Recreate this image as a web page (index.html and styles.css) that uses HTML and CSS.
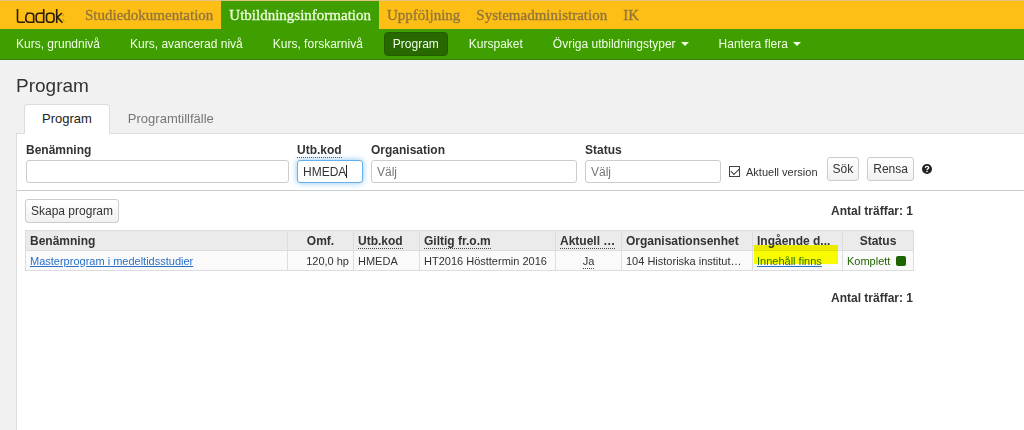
FILE: index.html
```html
<!DOCTYPE html>
<html lang="sv">
<head>
<meta charset="utf-8">
<title>Ladok – Program</title>
<link rel="stylesheet" href="styles.css">
</head>
<body>
<header>
  <nav class="topnav">
    <a class="logo" href="#" aria-label="Ladok">
      <svg width="51" height="18" viewBox="0 0 51 18" fill="none" stroke="#2b1c08" stroke-width="1.6">
        <path d="M1.5 1V12.5Q1.5 14.2 3.2 14.2H9"/>
        <path d="M10.5 5.3H15Q17.7 5.3 17.7 8V14.2H13Q9.800 14.200 9.800 11V9.500Q9.800 6.500 12 5.300"/>
        <path d="M27.700 1V14.200H23Q20.200 14.200 20.200 11.500V8Q20.200 5.300 23 5.300H27.700"/>
        <rect x="30.500" y="5.300" width="7.500" height="8.900" rx="2.600"/>
        <path d="M40.700 1V15M40.900 9.500L46 5M41.500 9.500L46.500 14.800"/>
        <path d="M48 6L46.500 8M46.500 11L48.500 14" stroke="#8fae1a" stroke-width="1"/>
      </svg>
    </a>
    <a href="#">Studiedokumentation</a>
    <a class="current" href="#">Utbildningsinformation</a>
    <a href="#">Uppföljning</a>
    <a href="#">Systemadministration</a>
    <a href="#">IK</a>
  </nav>
  <nav class="subnav">
    <a href="#">Kurs, grundnivå</a>
    <a href="#">Kurs, avancerad nivå</a>
    <a href="#">Kurs, forskarnivå</a>
    <a class="current" href="#">Program</a>
    <a href="#">Kurspaket</a>
    <a class="drop" href="#">Övriga utbildningstyper</a>
    <a class="drop" href="#">Hantera flera</a>
  </nav>
</header>
<main>
  <h1>Program</h1>
  <nav class="tabs">
    <a class="current" href="#">Program</a>
    <a href="#">Programtillfälle</a>
  </nav>
  <section class="panel">
    <form class="search">
      <div class="field name"><label for="name">Benämning</label><input id="name" type="text"></div>
      <div class="field code">
        <label for="code"><abbr>Utb.kod</abbr></label>
        <div class="active"><input id="code" type="text" value="HMEDA"><i class="caret"></i></div>
      </div>
      <div class="field org"><label for="org">Organisation</label><input id="org" type="text" placeholder="Välj"></div>
      <div class="field status"><label for="status">Status</label><input id="status" type="text" placeholder="Välj"></div>
      <label class="check"><input type="checkbox" checked>Aktuell version</label>
      <div class="actions">
        <button type="button">Sök</button>
        <button type="button">Rensa</button>
        <svg class="help" width="10" height="10" viewBox="0 0 10 10" role="img" aria-label="Hjälp">
          <circle cx="5" cy="5" r="5" fill="#222"/>
          <path d="M3.300 3.900Q3.400 2.300 5 2.300Q6.700 2.300 6.700 3.700Q6.700 4.500 5.800 4.900Q5 5.300 5 6" fill="none" stroke="#fff" stroke-width="1.300"/>
          <rect x="4.300" y="6.800" width="1.400" height="1.300" fill="#fff"/>
        </svg>
      </div>
    </form>
    <div class="results">
      <div class="bar"><button type="button">Skapa program</button><strong>Antal träffar: 1</strong></div>
      <table>
        <colgroup><col class="w-name"><col class="w-short"><col class="w-short"><col class="w-from"><col class="w-short"><col class="w-unit"><col class="w-parts"><col class="w-status"></colgroup>
        <thead>
          <tr><th>Benämning</th><th class="center">Omf.</th><th><abbr>Utb.kod</abbr></th><th><abbr>Giltig fr.o.m</abbr></th><th><abbr>Aktuell …</abbr></th><th>Organisationsenhet</th><th>Ingående d...</th><th class="center">Status</th></tr>
        </thead>
        <tbody>
          <tr><td><a href="#">Masterprogram i medeltidsstudier</a></td><td class="right">120,0 hp</td><td>HMEDA</td><td>HT2016 Hösttermin 2016</td><td class="center"><abbr>Ja</abbr></td><td>104 Historiska institut…</td><td class="marked"><a href="#">Innehåll finns</a></td><td class="complete">Komplett<i class="dot"></i></td></tr>
        </tbody>
      </table>
      <div class="bar end"><strong>Antal träffar: 1</strong></div>
    </div>
  </section>
</main>
</body>
</html>
```
FILE: styles.css
```css
* { box-sizing: border-box; }

body {
  margin: 0;
  min-height: 100vh;
  display: flex;
  flex-direction: column;
  background: #f1f1f1;
  color: #333;
  font: 12px/16px "Liberation Sans", Arial, sans-serif;
}

.topnav {
  display: flex;
  height: 29px;
  border-top: 1px solid #e2c383;
  background: #fdbf16;
  font: 15px/28px "Liberation Serif", Georgia, serif;
}
.topnav a {
  padding: 0 8px;
  color: #92743a;
  text-decoration: none;
  white-space: nowrap;
  -webkit-text-stroke: 0.3px;
}
.topnav .logo { padding: 7px 0 0 16px; margin-right: 10px; line-height: 0; }
.topnav .current { background: #3f9e00; color: #eeffdd; }

.subnav {
  display: flex;
  align-items: center;
  gap: 12px;
  height: 31px;
  padding: 0 7px;
  border-bottom: 1px solid #358500;
  background: #3f9e00;
  font-size: 12px;
}
.subnav a {
  padding: 4px 9px;
  color: #f1ffe6;
  text-decoration: none;
  white-space: nowrap;
}
.subnav .current {
  border-radius: 4px;
  border: 1px solid #245d00;
  background: #276800;
  padding: 3px 8px;
}
.drop::after {
  content: "";
  display: inline-block;
  margin-left: 5px;
  vertical-align: 2px;
  border: 4px solid transparent;
  border-top-color: currentColor;
  border-bottom: 0;
}

main { flex: 1; display: flex; flex-direction: column; padding: 14px 0 0 16px; }
h1 { margin: 0; font-size: 19px; line-height: 24px; font-weight: normal; }

.tabs { display: flex; padding-left: 8px; margin-top: 6px; font-size: 13px; }
.tabs a {
  padding: 6px 17px;
  color: #777;
  text-decoration: none;
  line-height: 16px;
  border: 1px solid transparent;
  border-bottom: 0;
}
.tabs .current {
  margin-bottom: -1px;
  padding-bottom: 7px;
  z-index: 1;
  background: #fff;
  color: #222;
  border-color: #ddd;
  border-radius: 4px 4px 0 0;
}

.panel { flex: 1; background: #fff; border: 1px solid #ddd; border-width: 1px 0 0 1px; }

.search {
  display: flex;
  align-items: flex-end;
  padding: 8px 0 7px 9px;
  border-bottom: 1px solid #ccc;
}
.field { display: flex; flex-direction: column; gap: 2px; margin-right: 8px; }
.field label { font-weight: bold; }
.name { width: 263px; }
.code { width: 66px; }
.org { width: 206px; }
.status { width: 136px; }
.field input {
  width: 100%;
  height: 23px;
  padding: 0 5px;
  border: 1px solid #ccc;
  border-radius: 3px;
  background: #fff;
  color: #333;
  font: inherit;
}
.field input::placeholder { color: #777; opacity: 1; }
.active { position: relative; }
.field .active input {
  display: block;
  border-color: #66afe9;
  box-shadow: 0 0 6px #8cc6f2;
}
.caret { position: absolute; left: 49px; top: 5px; width: 1px; height: 13px; background: #222; }

.check { display: flex; align-items: center; gap: 6px; height: 23px; font-size: 11px; white-space: nowrap; }
.check input {
  appearance: none;
  width: 11px;
  height: 11px;
  margin: 0;
  border: 1px solid #444;
  background: #fff;
  display: grid;
  place-items: center;
}
.check input:checked::after {
  content: "";
  width: 7px;
  height: 4px;
  margin-bottom: 2px;
  border: solid #333;
  border-width: 0 0 1px 1px;
  transform: rotate(-45deg);
}
.actions { display: flex; align-items: center; gap: 8px; margin: 0 0 2px 9px; }

button {
  height: 24px;
  padding: 0 5px;
  border: 1px solid #ccc;
  border-radius: 3px;
  background: linear-gradient(#fff, #f1f1f1);
  color: #333;
  font: inherit;
  white-space: nowrap;
}

.results { max-width: 896px; padding: 8px 0 8px 8px; }
.bar { display: flex; justify-content: space-between; align-items: center; height: 24px; margin-bottom: 7px; }
.bar.end { justify-content: flex-end; margin-top: 15px; }

table {
  width: 100%;
  table-layout: fixed;
  border-collapse: collapse;
  border: 1px solid #ddd;
  background: #fafafa;
}
.w-name { width: 262px; }
.w-short { width: 66px; }
.w-from { width: 136px; }
.w-unit { width: 131px; }
.w-parts { width: 90px; }
.w-status { width: 71px; }
th, td {
  height: 20px;
  padding: 1px 4px;
  border: 1px solid #ddd;
  text-align: left;
  white-space: nowrap;
}
th { background: #ebebeb; }
td { font-size: 11px; }
td a { color: #2a72c8; }
.center { text-align: center; }
.right { text-align: right; }
abbr {
  display: inline-block;
  border-bottom: 1px dotted #444;
  line-height: 13px;
  text-decoration: none;
}

.marked { position: relative; }
.marked::before {
  content: "";
  position: absolute;
  inset: -6px 4px 6px 1px;
  background: #ff0;
  mix-blend-mode: multiply;
}
.marked a { position: relative; color: #2b7200; text-decoration-color: #2a72c8; }
.complete { color: #226600; }
.dot {
  display: inline-block;
  width: 10px;
  height: 10px;
  margin-left: 6px;
  border-radius: 2px;
  background: #1d6500;
  vertical-align: -1px;
}
```
